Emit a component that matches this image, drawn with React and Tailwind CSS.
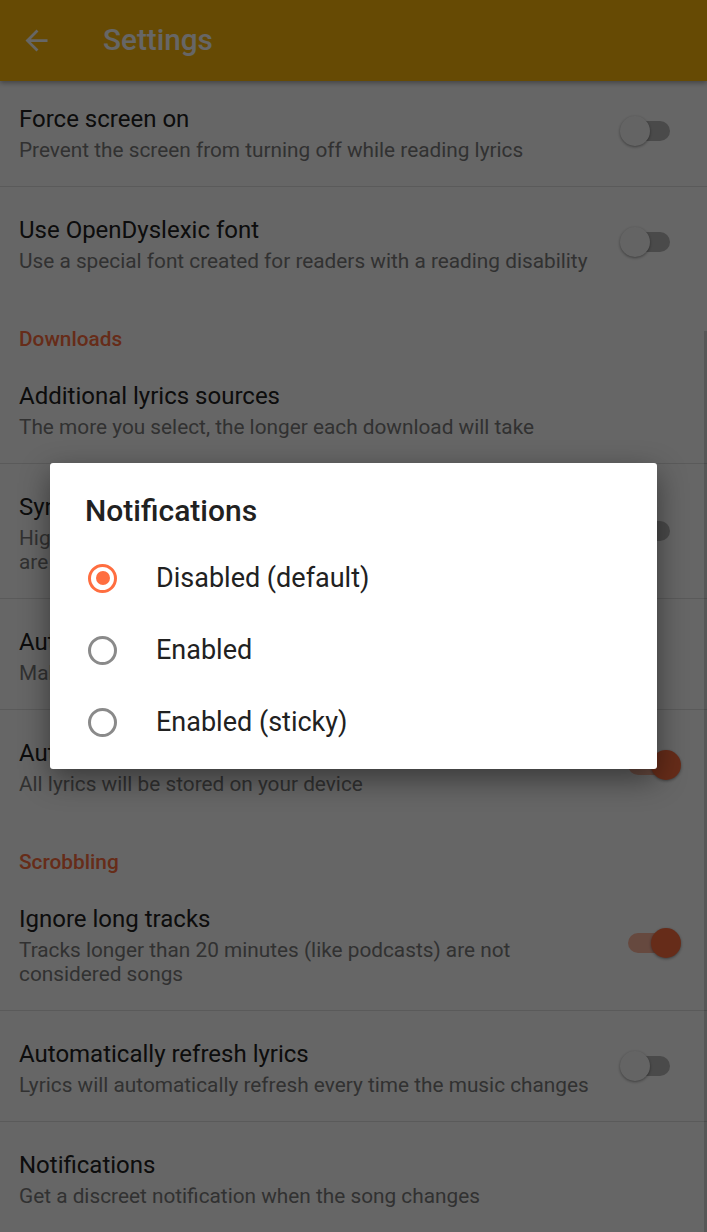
import React, { useState } from "react";

const Switch = ({ on }) => (
  <div className="relative ml-[20px] h-[30px] w-[62px] flex-shrink-0">
    <div
      className={`absolute left-[8px] top-[5px] h-[20px] w-[42px] rounded-full ${
        on ? "bg-[#ff6e40]/50" : "bg-[#b9b9b9]"
      }`}
    />
    <div
      className={`absolute top-0 h-[30px] w-[30px] rounded-full shadow-[0_1px_3px_rgba(0,0,0,0.4)] ${
        on ? "left-[31px] bg-[#ff6e40]" : "left-0 bg-[#fafafa]"
      }`}
    />
  </div>
);

const Pref = ({ title, summary, toggle, divider }) => (
  <div
    className={`flex items-center pl-[19px] pr-[25px] ${divider ? "border-b border-[#e0e0e0]" : ""}`}
  >
    <div className="flex-1 pt-[29px] pb-[24px]">
      <div className="text-[24px] leading-[28px] text-[#212121]">{title}</div>
      <div className="mt-[5px] text-[20.8px] leading-[24px] text-[#7c7c7c]">{summary}</div>
    </div>
    {toggle !== undefined && <Switch on={toggle} />}
  </div>
);

const Category = ({ children }) => (
  <div className="pl-[19px] pt-[30px] pb-[2px] text-[20.8px] font-medium leading-[24px] text-[#ff6e40]">
    {children}
  </div>
);

const options = ["Disabled (default)", "Enabled", "Enabled (sticky)"];

export default function App() {
  const [choice, setChoice] = useState(0);

  return (
    <div
      className="relative h-[1232px] w-full overflow-hidden bg-white"
      style={{ fontFamily: "Roboto, 'Noto Sans', sans-serif" }}
    >
      {/* Toolbar */}
      <div className="relative z-10 flex h-[81px] items-center bg-[#ffba0a] shadow-[0_2px_5px_rgba(0,0,0,0.35)]">
        <svg className="ml-[20px] h-[33px] w-[33px]" viewBox="0 0 24 24" fill="#ffffff">
          <path d="M20 11H7.83l5.59-5.59L12 4l-8 8 8 8 1.41-1.41L7.83 13H20v-2z" />
        </svg>
        <h1 className="ml-[50px] text-[29.7px] font-medium text-white">Settings</h1>
      </div>

      {/* Preference list */}
      <div className="relative -mt-[5px]">
        <Pref
          divider
          title="Force screen on"
          summary="Prevent the screen from turning off while reading lyrics"
          toggle={false}
        />
        <Pref
          title="Use OpenDyslexic font"
          summary="Use a special font created for readers with a reading disability"
          toggle={false}
        />

        <Category>Downloads</Category>
        <Pref
          divider
          title="Additional lyrics sources"
          summary="The more you select, the longer each download will take"
        />
        <Pref
          divider
          title="Synchronized lyrics"
          summary="Highlight every line as the song plays when synchronized lyrics are available"
          toggle={false}
        />
        <Pref
          divider
          title="Auto-update lyrics"
          summary="Make sure saved lyrics stay up to date"
        />
        <Pref
          title="Automatically download lyrics"
          summary="All lyrics will be stored on your device"
          toggle={true}
        />

        <Category>Scrobbling</Category>
        <Pref
          divider
          title="Ignore long tracks"
          summary="Tracks longer than 20 minutes (like podcasts) are not considered songs"
          toggle={true}
        />
        <Pref
          divider
          title="Automatically refresh lyrics"
          summary="Lyrics will automatically refresh every time the music changes"
          toggle={false}
        />
        <Pref
          title="Notifications"
          summary="Get a discreet notification when the song changes"
        />
      </div>

      {/* Scrollbar thumb */}
      <div className="absolute right-0 top-[331px] bottom-0 w-[3px] bg-black/15" />

      {/* Dialog */}
      <div className="absolute inset-0 z-20 flex items-center justify-center bg-black/60">
        <div className="w-[607px] rounded-[3px] bg-white pt-[32px] pb-[11px] shadow-[0_10px_30px_rgba(0,0,0,0.45)]">
          <h2 className="pl-[35px] text-[30px] font-medium leading-[32px] text-[#212121]">
            Notifications
          </h2>
          <div className="mt-[15px]">
            {options.map((label, i) => (
              <button
                key={label}
                onClick={() => setChoice(i)}
                className="flex h-[72px] w-full items-center pl-[38px] text-left"
              >
                <span
                  className={`flex h-[29px] w-[29px] items-center justify-center rounded-full border-[3px] ${
                    choice === i ? "border-[#ff6e40]" : "border-[#8a8a8a]"
                  }`}
                >
                  {choice === i && <span className="h-[14px] w-[14px] rounded-full bg-[#ff6e40]" />}
                </span>
                <span className="ml-[39px] text-[27px] text-[#212121]">{label}</span>
              </button>
            ))}
          </div>
        </div>
      </div>
    </div>
  );
}
